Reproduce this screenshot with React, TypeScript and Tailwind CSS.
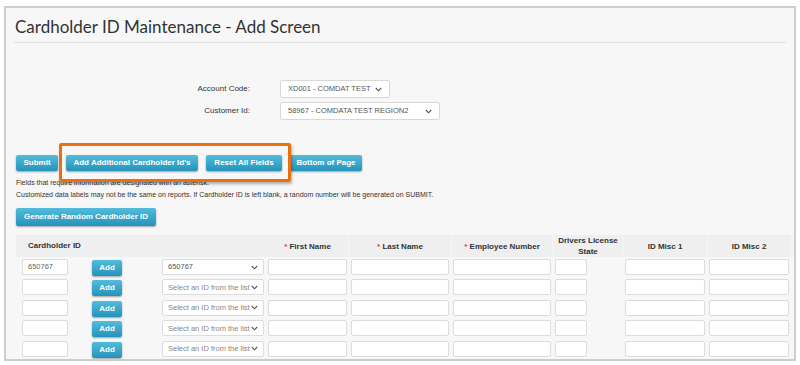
import React from 'react'

const cols = 'grid-cols-[72px_70px_108px_83px_102px_102px_70px_84px_84px]'

function Btn({ children, className = '' }: { children: React.ReactNode; className?: string }) {
  return (
    <div
      className={`flex items-center justify-center whitespace-nowrap rounded-[2px] bg-gradient-to-b from-[#52bcdb] to-[#2393ba] text-white font-bold text-[8px] shadow-[0_1px_2px_rgba(0,0,0,0.35)] ${className}`}
    >
      {children}
    </div>
  )
}

function Box({ className = '', children }: { className?: string; children?: React.ReactNode }) {
  return (
    <div className={`h-[16px] bg-white border border-[#dcdcdc] rounded-[2px] flex items-center px-[5px] text-[7.5px] text-[#666] whitespace-nowrap ${className}`}>
      {children}
    </div>
  )
}

function Chevron() {
  return (
    <svg width="7" height="5" viewBox="0 0 7 5" className="ml-auto shrink-0">
      <path d="M0.8 1 L3.5 3.8 L6.2 1" fill="none" stroke="#555" strokeWidth="1.1" />
    </svg>
  )
}

function Row({ first }: { first?: boolean }) {
  return (
    <div className={`grid ${cols} h-[20.4px] items-start pt-[1px]`}>
      <div className="pl-[6px]">
        <Box className="w-[46px]">{first ? '650767' : ''}</Box>
      </div>
      <div className="pl-[4px] pt-[1px]">
        <Btn className="w-[30px] h-[16px]">Add</Btn>
      </div>
      <div className="pl-[4px]">
        <Box className={`w-[102px] ${first ? 'border-[#444] border-[1.5px]' : ''}`}>
          <span className={first ? 'text-[#555]' : 'text-[#888]'}>{first ? '650767' : 'Select an ID from the list'}</span>
          <Chevron />
        </Box>
      </div>
      <div className="pl-[2px]"><Box className="w-[79px]" /></div>
      <div className="pl-[2px]"><Box className="w-[98px]" /></div>
      <div className="pl-[2px]"><Box className="w-[98px]" /></div>
      <div className="pl-[2px]"><Box className="w-[32px]" /></div>
      <div className="pl-[2px]"><Box className="w-[80px]" /></div>
      <div className="pl-[2px]"><Box className="w-[80px]" /></div>
    </div>
  )
}

function Head({ children, star }: { children: React.ReactNode; star?: boolean }) {
  return (
    <div className="h-full bg-[#efefef] flex items-center justify-center text-center leading-[11px] mx-[1px]">
      <span>
        {star && <span className="text-[#e23b3b]">* </span>}
        {children}
      </span>
    </div>
  )
}

export default function App() {
  return (
    <div className="w-[800px] h-[365px] bg-white pt-[6px] pl-[4px] font-['Liberation_Sans',Arial,sans-serif]">
      <div className="relative w-[792px] h-[355px] border-2 border-[#cdcdcd] bg-[#f7f7f7] overflow-hidden">
        <div className="mx-[8px] pt-[8px] pb-[4px] border-b border-[#e0e0e0]">
          <h1 className="font-['Lato',sans-serif] text-[17px] leading-[22px] text-[#333] pl-[1px]">
            Cardholder ID Maintenance - Add Screen
          </h1>
        </div>

        <div className="mt-[37px] flex flex-col gap-[4px] text-[8px] text-[#333]">
          <div className="flex items-center">
            <div className="w-[244px] text-right">Account Code:</div>
            <div className="ml-[30px] w-[110px] h-[18px] bg-white border border-[#d8d8d8] rounded-[2px] flex items-center px-[7px] text-[7.5px] text-[#555] whitespace-nowrap">
              XD001 - COMDAT TEST
              <Chevron />
            </div>
          </div>
          <div className="flex items-center">
            <div className="w-[244px] text-right">Customer Id:</div>
            <div className="ml-[30px] w-[160px] h-[18px] bg-white border border-[#d8d8d8] rounded-[2px] flex items-center px-[7px] text-[7.5px] text-[#555] whitespace-nowrap">
              58967 - COMDATA TEST REGION2
              <Chevron />
            </div>
          </div>
        </div>

        <div className="mt-[35px] ml-[10px] flex gap-[8px]">
          <Btn className="w-[42px] h-[16px]">Submit</Btn>
          <Btn className="w-[132px] h-[16px]">Add Additional Cardholder Id's</Btn>
          <Btn className="w-[76px] h-[16px]">Reset All Fields</Btn>
          <Btn className="w-[72px] h-[16px]">Bottom of Page</Btn>
        </div>

        <div className="mt-[6px] ml-[10px] text-[7px] leading-[12px] text-[#333]">
          <div>Fields that require information are designated with an asterisk.</div>
          <div>Customized data labels may not be the same on reports. If Cardholder ID is left blank, a random number will be generated on SUBMIT.</div>
        </div>

        <Btn className="mt-[7px] ml-[10px] w-[140px] h-[18px]">Generate Random Cardholder ID</Btn>

        <div className="mt-[9px] ml-[10px]">
          <div className={`grid ${cols} h-[22px] text-[8px] font-bold text-[#333] bg-[#f3f3f3]`}>
            <div className="h-full bg-[#efefef] flex items-center pl-[12px] col-span-3">Cardholder ID</div>
            <Head star>First Name</Head>
            <Head star>Last Name</Head>
            <Head star>Employee Number</Head>
            <Head>Drivers License<br />State</Head>
            <Head>ID Misc 1</Head>
            <Head>ID Misc 2</Head>
          </div>
          <div className="pt-[1px]">
            <Row first />
            <Row />
            <Row />
            <Row />
            <Row />
          </div>
        </div>

        <div className="absolute left-[53px] top-[135px] w-[232px] h-[39px] border-[3px] border-[#e8700f] rounded-[2px] shadow-[1px_2px_3px_rgba(0,0,0,0.3)]" />
      </div>
    </div>
  )
}
